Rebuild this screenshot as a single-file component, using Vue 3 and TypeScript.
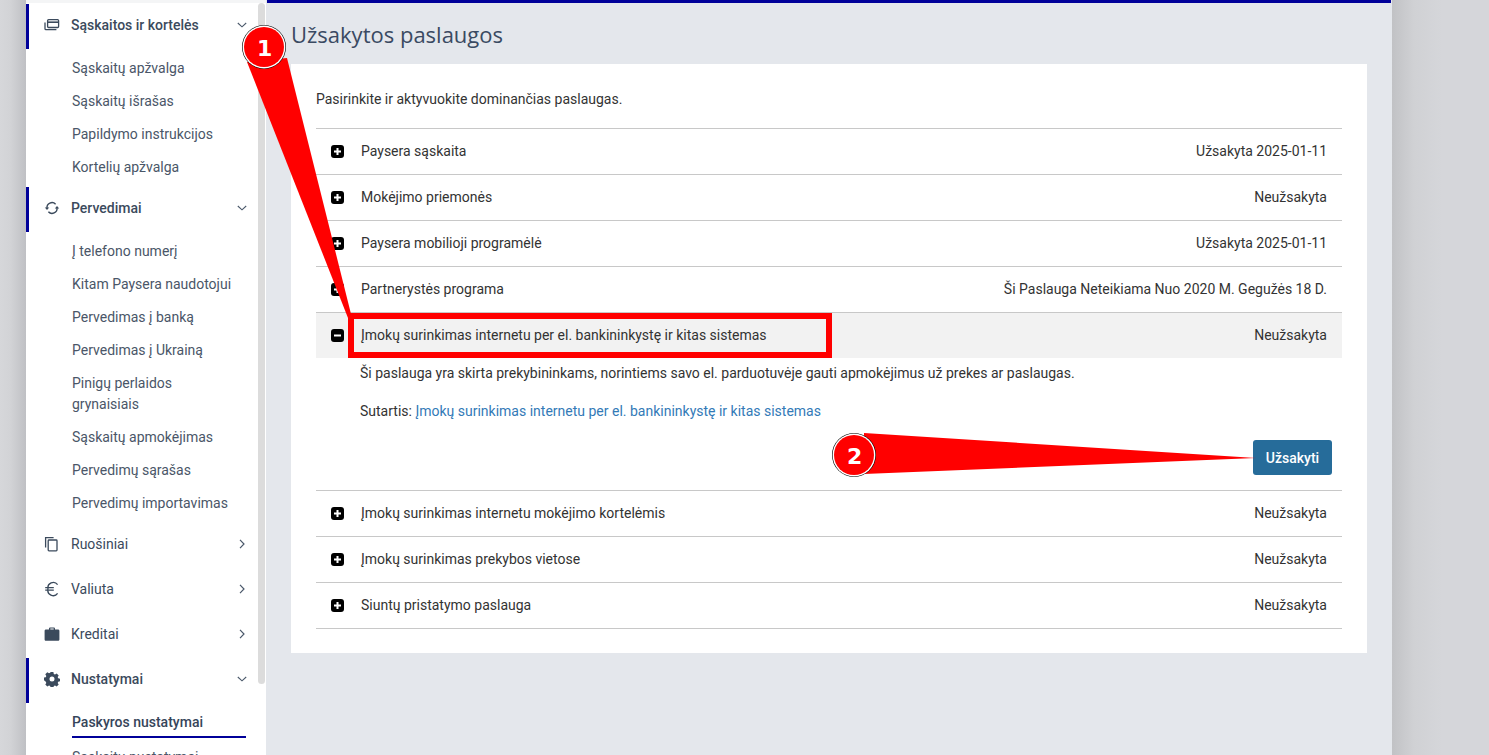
<script setup lang="ts">
interface Sub { label: string; active?: boolean }
interface Group { label: string; icon: string; open: boolean; subs: Sub[] }

const groups: Group[] = [
  { label: 'Sąskaitos ir kortelės', icon: 'cards', open: true, subs: [
    { label: 'Sąskaitų apžvalga' }, { label: 'Sąskaitų išrašas' }, { label: 'Papildymo instrukcijos' }, { label: 'Kortelių apžvalga' },
  ] },
  { label: 'Pervedimai', icon: 'sync', open: true, subs: [
    { label: 'Į telefono numerį' }, { label: 'Kitam Paysera naudotojui' }, { label: 'Pervedimas į banką' }, { label: 'Pervedimas į Ukrainą' },
    { label: 'Pinigų perlaidos grynaisiais' }, { label: 'Sąskaitų apmokėjimas' }, { label: 'Pervedimų sąrašas' }, { label: 'Pervedimų importavimas' },
  ] },
  { label: 'Ruošiniai', icon: 'copy', open: false, subs: [] },
  { label: 'Valiuta', icon: 'euro', open: false, subs: [] },
  { label: 'Kreditai', icon: 'case', open: false, subs: [] },
  { label: 'Nustatymai', icon: 'gear', open: true, subs: [
    { label: 'Paskyros nustatymai', active: true }, { label: 'Sąskaitų nustatymai' },
  ] },
]

interface Row { name: string; status: string; open?: boolean }
const rows: Row[] = [
  { name: 'Paysera sąskaita', status: 'Užsakyta 2025-01-11' },
  { name: 'Mokėjimo priemonės', status: 'Neužsakyta' },
  { name: 'Paysera mobilioji programėlė', status: 'Užsakyta 2025-01-11' },
  { name: 'Partnerystės programa', status: 'Ši Paslauga Neteikiama Nuo 2020 M. Gegužės 18 D.' },
  { name: 'Įmokų surinkimas internetu per el. bankininkystę ir kitas sistemas', status: 'Neužsakyta', open: true },
  { name: 'Įmokų surinkimas internetu mokėjimo kortelėmis', status: 'Neužsakyta' },
  { name: 'Įmokų surinkimas prekybos vietose', status: 'Neužsakyta' },
  { name: 'Siuntų pristatymo paslauga', status: 'Neužsakyta' },
]
</script>

<template>
  <div class="page">
    <div class="gutter-left"></div>
    <aside class="sidebar">
      <div class="sidebar-inner">
        <section v-for="g in groups" :key="g.label" class="group">
          <div class="head" :class="{ open: g.open }">
            <svg class="gicon" width="16" height="16" viewBox="0 0 16 16">
              <g v-if="g.icon === 'cards'" fill="none" stroke="currentColor" stroke-width="1.3">
                <rect x="3.6" y="2.7" width="11" height="7.8" rx="1" />
                <path d="M3.6 5.2h11" stroke-width="1.6" />
                <path d="M1 5.5v6.2c0 .6.4 1 1 1h10.4" />
              </g>
              <g v-else-if="g.icon === 'sync'" fill="none" stroke="currentColor" stroke-width="1.4">
                <path d="M3 8.2A5 5 0 0 1 11.6 4.2" />
                <path d="M13 7.8A5 5 0 0 1 4.4 11.8" />
                <path d="M.8 7.4h4.4L3 10z" fill="currentColor" stroke="none" />
                <path d="M10.8 8.6h4.4L13 6z" fill="currentColor" stroke="none" />
              </g>
              <g v-else-if="g.icon === 'copy'" fill="none" stroke="currentColor" stroke-width="1.3">
                <path d="M1.6 11.5V1.6h8" />
                <rect x="4.2" y="4" width="8.8" height="10.8" rx=".8" />
              </g>
              <g v-else-if="g.icon === 'euro'" fill="none" stroke="currentColor" stroke-width="1.3">
                <path d="M13.6 3.6A5.4 5.4 0 0 0 4 7.9a5.4 5.4 0 0 0 9.6 4.5" />
                <path d="M1.2 6.6h8.6M1.2 9.2h8.6" />
              </g>
              <g v-else-if="g.icon === 'case'" fill="currentColor">
                <path d="M5 3.4V2.6C5 1.9 5.6 1.4 6.2 1.4h3.6c.6 0 1.2.5 1.2 1.2v.8h3c.8 0 1.4.6 1.4 1.4v8.6c0 .8-.6 1.4-1.4 1.4H2c-.8 0-1.4-.6-1.4-1.4V4.8c0-.8.6-1.4 1.4-1.4zM6.3 3.4h3.4v-.8H6.3z" fill-rule="evenodd" />
              </g>
              <g v-else fill="currentColor">
                <path d="M6.6 1h2.8l.4 1.9 1.2.5 1.7-1 2 2-1 1.7.5 1.2 1.8.4v2.6l-1.8.4-.5 1.2 1 1.7-2 2-1.7-1-1.2.5-.4 1.8H6.6l-.4-1.8-1.2-.5-1.7 1-2-2 1-1.7-.5-1.2L0 9.2V6.6l1.8-.4.5-1.2-1-1.7 2-2 1.7 1 1.2-.5zM8 5.4a2.5 2.5 0 1 0 0 5 2.5 2.5 0 0 0 0-5z" fill-rule="evenodd" />
              </g>
            </svg>
            <span class="glabel">{{ g.label }}</span>
            <svg class="chev" :class="{ down: g.open }" width="10" height="10" viewBox="0 0 10 10">
              <path v-if="g.open" d="M.8 3 5 6.8 9.2 3" fill="none" stroke="currentColor" stroke-width="1.1" />
              <path v-else d="M3 .8 7 5 3 9.2" fill="none" stroke="currentColor" stroke-width="1.2" />
            </svg>
          </div>
          <ul v-if="g.subs.length" class="subs">
            <li v-for="s in g.subs" :key="s.label" :class="{ active: s.active }">{{ s.label }}</li>
          </ul>
        </section>
      </div>
      <div class="thumb"></div>
    </aside>

    <main class="main">
      <div class="topbar"></div>
      <h1 class="title">Užsakytos paslaugos</h1>
      <div class="card">
        <p class="intro">Pasirinkite ir aktyvuokite dominančias paslaugas.</p>
        <div class="list">
          <div v-for="r in rows" :key="r.name" class="item">
            <div class="row" :class="{ open: r.open }">
              <svg class="tog" width="13" height="13" viewBox="0 0 13 13">
                <rect width="13" height="13" rx="3" fill="#000" />
                <path :d="r.open ? 'M3 6.5h7' : 'M3 6.5h7M6.5 3v7'" stroke="#fff" stroke-width="2" />
              </svg>
              <span class="name">{{ r.name }}</span>
              <span class="status">{{ r.status }}</span>
            </div>
            <div v-if="r.open" class="detail">
              <p class="desc">Ši paslauga yra skirta prekybininkams, norintiems savo el. parduotuvėje gauti apmokėjimus už prekes ar paslaugas.</p>
              <p class="contract">Sutartis: <a>Įmokų surinkimas internetu per el. bankininkystę ir kitas sistemas</a></p>
              <div class="actions"><button class="btn" type="button">Užsakyti</button></div>
            </div>
          </div>
        </div>
      </div>
    </main>
    <div class="gutter-right"></div>

    <svg class="overlay" width="1489" height="755" viewBox="0 0 1489 755">
      <rect x="351" y="316" width="478" height="39" fill="none" stroke="#f00" stroke-width="6" />
      <path d="M247 62 287 58 352 318 348 318z" fill="#f00" />
      <path d="M864 433 1256 458 864 474z" fill="#f00" />
      <g>
        <circle cx="264" cy="47" r="22" fill="#000" />
        <circle cx="264" cy="47" r="21.4" fill="#fff" />
        <circle cx="264" cy="47" r="20" fill="#f00" />
        <text x="264.7" y="55.5" class="num">1</text>
      </g>
      <g>
        <circle cx="854" cy="455" r="22" fill="#000" />
        <circle cx="854" cy="455" r="21.4" fill="#fff" />
        <circle cx="854" cy="455" r="20" fill="#f00" />
        <text x="854.7" y="463.5" class="num">2</text>
      </g>
    </svg>
  </div>
</template>

<style>
html, body { margin: 0; padding: 0; overflow: hidden; }
</style>

<style scoped>
.page {
  position: relative;
  display: flex;
  width: 1489px;
  height: 755px;
  overflow: hidden;
  font-family: Roboto, "Liberation Sans", sans-serif;
  font-size: 14px;
  color: #333;
}
.gutter-left {
  width: 26px;
  flex: none;
  background: linear-gradient(90deg, #d6d7da 0%, #d2d3d6 40%, #bfc0c4 100%);
}
.gutter-right {
  flex: 1;
  background: linear-gradient(90deg, #c1c2c5 0, #d0d1d4 22px, #d5d6da 50px);
}
.sidebar {
  position: relative;
  width: 240px;
  flex: none;
  background: #fff;
  overflow: hidden;
  box-shadow: inset 0 3px 0 #f4f5f6;
}
.sidebar-inner { padding-top: 4px; }
.head {
  display: flex;
  align-items: center;
  box-sizing: border-box;
  height: 45px;
  padding: 0 19px 3px 15px;
  border-left: 3px solid transparent;
  color: #3b4a5c;
}
.head.open { border-left-color: #000099; font-weight: 500; }
.gicon { flex: none; margin-right: 11px; color: #3b4a5c; }
.glabel { flex: 1; font-size: 14px; }
.chev { flex: none; color: #4a586a; }
.subs {
  list-style: none;
  margin: 0;
  padding: 3px 20px 3px 46px;
  color: #4a5668;
}
.subs li { padding: 6px 12px 6px 0; line-height: 21px; }
.subs li.active {
  font-weight: 500;
  color: #36455a;
  border-bottom: 2px solid #000099;
  padding-bottom: 3px;
  margin-bottom: 3px;
}
.thumb {
  position: absolute;
  top: 3px;
  right: 1px;
  width: 7px;
  height: 681px;
  border-radius: 4px;
  background: #dcdcdc;
}
.main {
  position: relative;
  width: 1126px;
  flex: none;
  box-sizing: border-box;
  padding: 0 25px 0 25px;
  background: #e4e7ec;
}
.topbar {
  height: 3px;
  margin: 0 -24px 0 -24px;
  background: #000099;
}
.title {
  margin: 0;
  height: 61px;
  box-sizing: border-box;
  padding-top: 16px;
  font-family: "Open Sans", sans-serif;
  font-size: 22px;
  font-weight: 400;
  line-height: 30px;
  color: #3a4a62;
}
.card {
  background: #fff;
  padding: 25px 25px 24px;
  height: 589px;
  box-sizing: border-box;
}
.intro { margin: 0; height: 39px; line-height: 21px; }
.list { border-bottom: 1px solid #c8c8c8; }
.item { border-top: 1px solid #c8c8c8; }
.row {
  display: flex;
  align-items: center;
  box-sizing: border-box;
  height: 45px;
  padding: 0 15px 1px;
}
.row.open { background: #f2f2f2; }
.tog { flex: none; margin-right: 17px; }
.name { flex: 1; }
.detail { padding: 0 0 15px 44px; }
.desc { margin: 5px 0 0; line-height: 21px; }
.contract { margin: 17px 0 0; line-height: 21px; }
.contract a { color: #337ab7; }
.actions { display: flex; justify-content: flex-end; margin-top: 18px; padding-right: 10px; }
.btn {
  width: 79px;
  height: 35px;
  border: 0;
  border-radius: 3px;
  background: #266c9a;
  color: #fff;
  font: 500 14px Roboto, "Liberation Sans", sans-serif;
  padding: 0;
}
.overlay { position: absolute; inset: 0; pointer-events: none; }
.num {
  font-family: "DejaVu Sans", sans-serif;
  font-weight: 700;
  font-size: 22px;
  fill: #fff;
  text-anchor: middle;
}
</style>
